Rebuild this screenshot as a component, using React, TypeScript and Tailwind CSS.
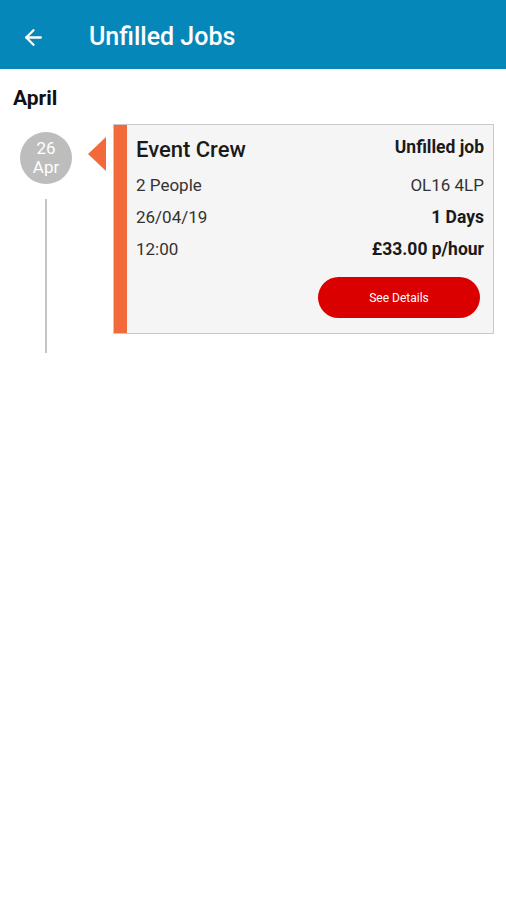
import { ArrowLeft } from "lucide-react";

interface IJob {
    title: string,
    status: string,
    people: string,
    postcode: string,
    date: string,
    duration: string,
    time: string,
    rate: string,
}

const job: IJob = {
    title: "Event Crew",
    status: "Unfilled job",
    people: "2 People",
    postcode: "OL16 4LP",
    date: "26/04/19",
    duration: "1 Days",
    time: "12:00",
    rate: "£33.00 p/hour",
};

function JobCard({ job }: { job: IJob }) {
    return (
        <div className="flex w-[381px] border border-[#c9c9c9] bg-[#f5f5f5]">
            <div className="w-[13px] shrink-0 bg-[#f26a3a]" />
            <div className="flex-1 pl-[9px] pr-[9px] pt-[11px] pb-[15px]">
                <div className="flex items-center justify-between h-[26px]">
                    <span className="text-[22px] font-medium text-[#1a1a1a]">{job.title}</span>
                    <span className="text-[17.5px] font-bold text-[#1a1a1a] -mt-[4px]">{job.status}</span>
                </div>
                <div className="mt-[11px] flex flex-col gap-[8px] text-[17px] text-[#333]">
                    <div className="flex justify-between leading-[24px]">
                        <span>{job.people}</span>
                        <span>{job.postcode}</span>
                    </div>
                    <div className="flex justify-between leading-[24px]">
                        <span>{job.date}</span>
                        <span className="text-[17.5px] font-bold text-[#1a1a1a]">{job.duration}</span>
                    </div>
                    <div className="flex justify-between leading-[24px]">
                        <span>{job.time}</span>
                        <span className="text-[17.5px] font-bold text-[#1a1a1a]">{job.rate}</span>
                    </div>
                </div>
                <div className="mt-[16px] flex justify-end pr-[4px]">
                    <button className="h-[41px] w-[162px] rounded-full bg-[#db0000] text-[12px] text-white">
                        See Details
                    </button>
                </div>
            </div>
        </div>
    )
}

export default function App() {
    return (
        <div className="min-h-[900px] w-[506px] bg-white font-['Roboto',sans-serif]">
            <div className="flex h-[69px] items-center bg-[#0687ba] px-[21px] pt-[5px]">
                <ArrowLeft className="h-[25px] w-[25px] text-white" strokeWidth={2.2} />
                <h1 className="ml-[43px] text-[25px] font-medium text-white">Unfilled Jobs</h1>
            </div>

            <h2 className="pl-[13px] pt-[17px] text-[21px] font-bold leading-[24px] text-[#111]">April</h2>

            <div className="mt-[14px] flex">
                <div className="flex w-[92px] shrink-0 flex-col items-center pl-[20px] pr-[20px] pt-[8px]">
                    <div className="flex h-[52px] w-[52px] flex-col items-center justify-center rounded-full bg-[#bdbdbd] text-[17px] leading-[19px] text-white">
                        <span>26</span>
                        <span>Apr</span>
                    </div>
                    <div className="mt-[15px] h-[154px] w-[2px] bg-[#c4c4c4]" />
                </div>
                <div className="mt-[13px] h-0 w-0 border-y-[17px] border-r-[18px] border-y-transparent border-r-[#f26a3a] -ml-[4px]" />
                <div className="ml-[7px]">
                    <JobCard job={job} />
                </div>
            </div>
        </div>
    )
}
